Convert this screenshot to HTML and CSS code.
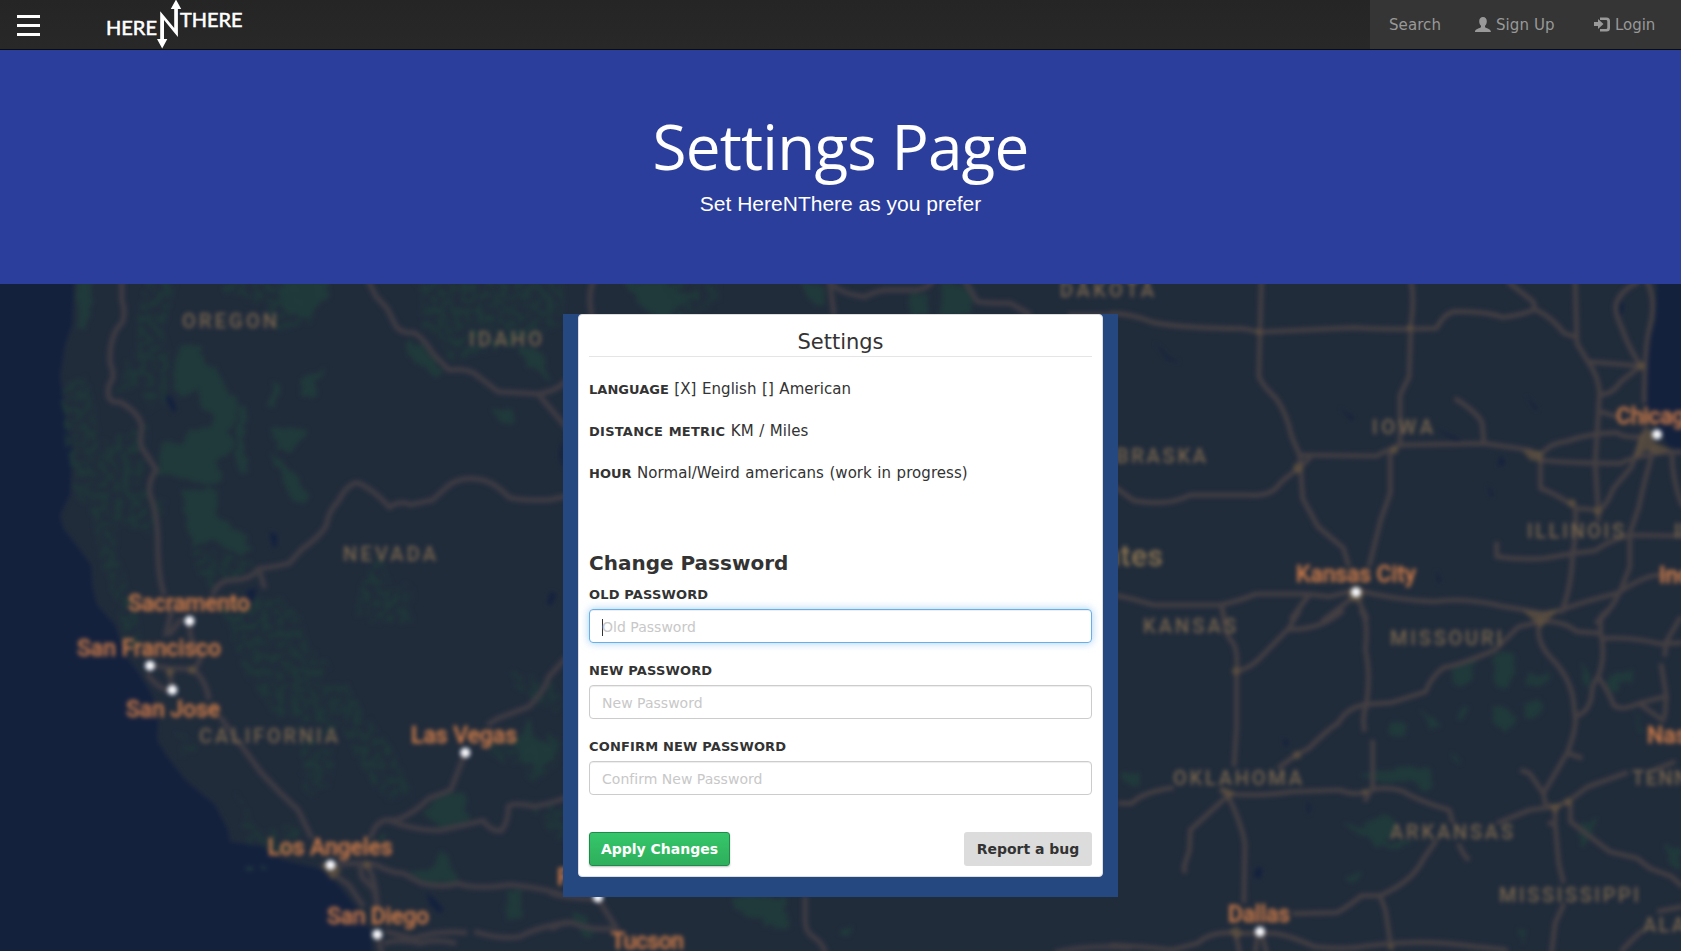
FILE: index.html
```html
<!DOCTYPE html>
<html lang="en">
<head>
<meta charset="utf-8">
<title>HereNThere - Settings</title>
<link rel="stylesheet" href="styles.css">
</head>
<body>
<nav class="navbar">
  <div class="nav-left">
    <button class="menu-btn" aria-label="Menu"><span></span><span></span><span></span></button>
    <svg class="logo" width="150" height="49" viewBox="100 0 150 49">
      <text x="106" y="34.6" textLength="51" lengthAdjust="spacingAndGlyphs">HERE</text>
      <text x="180" y="26.8" textLength="62.5" lengthAdjust="spacingAndGlyphs">THERE</text>
      <path d="M160.2 11.3L174.2 28V9H170.8L176 -0.5L181.2 9H177.9V37L164 20V39H167.3L162.2 48.5L157 39H160.2Z"/>
    </svg>
  </div>
  <div class="nav-right">
    <a class="nav-search">Search</a>
    <a class="nav-signup"><svg width="16" height="15" viewBox="0 0 16 15"><path d="M8 0C10.4 0 11.8 1.700 11.800 4.200C11.800 6.200 11 7.800 10 8.800V10.200C11 11.100 15.500 12 15.800 14.200V15H0V14.200C.4 12 5 11.100 6 10.200V8.800C5 7.800 4.200 6.200 4.200 4.200C4.200 1.700 5.600 0 8 0Z"/></svg>Sign Up</a>
    <a class="nav-login"><svg width="16" height="15" viewBox="0 0 16 15"><path d="M0 5H4V2L9.500 7L4 12V9H0ZM6 .5H12.500Q16 .5 16 4V11Q16 14.500 12.500 14.500H6V12H12Q13.300 12 13.300 10.700V4.300Q13.300 3 12 3H6Z"/></svg>Login</a>
  </div>
</nav>
<header class="hero">
  <h1>Settings Page</h1>
  <p>Set HereNThere as you prefer</p>
</header>
<main class="content">
  <svg class="map" viewBox="0 284 1681 667" preserveAspectRatio="xMidYMin slice">
    <defs>
      <filter id="soft" filterUnits="userSpaceOnUse" x="-20" y="264" width="1721" height="707" color-interpolation-filters="sRGB"><feGaussianBlur stdDeviation="2.1"/></filter>
      <filter id="ragged" x="-5%" y="-5%" width="110%" height="110%" color-interpolation-filters="sRGB">
        <feTurbulence type="fractalNoise" baseFrequency="0.07" numOctaves="3" seed="4"/>
        <feDisplacementMap in="SourceGraphic" scale="11" xChannelSelector="R" yChannelSelector="G"/>
      </filter>
      <filter id="speckle" x="-5%" y="-5%" width="110%" height="110%" color-interpolation-filters="sRGB">
        <feTurbulence type="fractalNoise" baseFrequency="0.13" numOctaves="3" seed="8" result="n"/>
        <feColorMatrix in="n" values="0 0 0 0 0  0 0 0 0 0  0 0 0 0 0  8 0 0 0 -3.6" result="m"/>
        <feDisplacementMap in="SourceGraphic" in2="n" scale="14" xChannelSelector="R" yChannelSelector="G" result="d"/>
        <feComposite in="d" in2="m" operator="in"/>
      </filter>
    </defs>
    <rect class="land" y="284" width="1681" height="667"/>
    <g filter="url(#soft)">
      <g class="water">
        <path d="M-30 240H76L72 325L65 345L60 376L65 415L72 450L70 495L60 515L63 528L80 550L91 565L92 585L97 605L115 625L125 655L140 675L152 695L158 715L157 740L166 755L185 780L215 805L228 830L230 842L262 846L282 860L308 866L325 871L338 885L358 910L370 930L376 990H-30Z"/>
        <path d="M1660 240H1720V460L1668 446L1647 405V350L1655 320Z"/>
        <path d="M563 440Q556 455 563 468ZM269 532l8 2 0 12-4 2ZM164 395l8 2 5 12-4 4ZM247 590l10-2-3 12-8 2ZM426 892l10 8 8 10-5 3-9-8ZM550 592l7 2-6 12-4-2Z"/>
        <path d="M1620 302l4 2-1 9-4 2ZM1154 342l16 16 10 4-12-2ZM1340 408l14 10-2 3ZM1434 427l28 14-4 2ZM1526 395l12 14-3 1ZM1500 455l6 8-8 4ZM1487 485l7 10-3 2ZM1307 800l4 8-3 7ZM1257 867l6 2-3 10-7-3ZM1436 570l5 12-3 1ZM1283 738l6 4-4 6Z"/>
      </g>
      <g class="park" filter="url(#ragged)">
        <path d="M77 278h15l0 25-6 26h-8ZM178 350l12-7 13 5 0 15 14 4 8 18 14 20-4 20-10 12-18-6 5-16-10-10-5-16-15 8-10-16Z"/>
        <path d="M160 443l22-2 10-12h38l4 23-16 9 5 17-14 10-20-9-30-5ZM183 490h36l-2 26 24 15 9 16-10 10-28-18-18 8-8-20Z"/>
        <path d="M270 428h34l-8 22h-18ZM270 452l14 10 12 12 12 20-4 10-16-6-6-20ZM274 383l7 2-5 24h-11ZM301 380l10-5 16-10-12 20-1 12h-14ZM240 405h8l-5 35 4 34h-8l-3-30Z"/>
        <path d="M406 342l14 2 24 28-6 4-20-12-12-10ZM517 343l26 8 8 30-20-12-12-18ZM494 410h20l-2 16h-12ZM279 285l20-6 30 2-2 18-20 20-24-8Z"/>
        <path d="M424 814l22-24 18 4 6 26-26 10ZM506 892h18l-2 26-18 2ZM405 872l24-2 15-20 10 18 2 12-30 4ZM382 830l-2 8 8-3ZM515 740l15-20 6 20 24 4-20 30-14-10Z"/>
        <path d="M730 896h57l-1 20 5 14-26-4-18-10-12-8ZM574 911l10 4 10 20-8 3-12-14ZM620 280l40 0 18 10 10 8-20 22-20-8ZM800 284h22l4 16-10 8ZM910 294h18v22h-20ZM940 284l34 2-2 28-30 2ZM842 930l10-3-2 8h-8Z"/>
        <path d="M1450 668l26-12-8 28-16 2ZM1496 653h18l2 20-10 16-12-5ZM1527 672l20 4 0-10 2 18-22 2ZM1610 676l24-6 0 12-16 2-4 10-8-4ZM1580 663l12 10-6 16ZM1490 706l16 2 12 12-12 14-12-14ZM1523 704l18-5-2 16-14 5ZM1460 706l8 2-6 14-4-4ZM1420 712l8 4 14 8-10 8ZM1390 722h18l-4 12-14 0ZM1450 752l14 12-12-2Z"/>
        <path d="M1362 775l36-7h32l4 18-4 6-16-10h-44ZM1122 773l18 2-2 10-14-2ZM1342 824l20 3 26-14 10 8-14 24-24-8ZM1370 840l44 2-6 6-32 0ZM1347 876l13-4-4 9-8-2ZM1580 825l16-8-4 20-10 12-4-4ZM1664 846l16 2v22l-12-8ZM1518 925l8 4-4 14ZM1635 708l8 26-4 0Z"/>
      </g>
      <g class="park faint" filter="url(#speckle)">
        <path d="M150 275h28l-6 34-8 18 8 30-6 48-16 6-6-25-28 6 22-46 0-26ZM225 275h100l4 14-18 34-30 8-14-26-42-12ZM62 385l24-8 10 30 4 40 50-22-6 60 24 20-16 30-36-16 4 40 20 60 2 32-16 0-8-50-14-30-8-52-22-28-8-60ZM190 550l60 6 10 20-50 14ZM415 280h150v44l-40 20-30 5-40 14-30-36Z"/>
        <path d="M220 606l60-10 20 20 10 30 22 22-16 14 24 40-10 20-14-20-40-8-28-38ZM318 685l30 0 20 32 24 28 22 50-26 6-28-38-16-34-24-20ZM300 725l36 30-6 32-22 8ZM360 590l20-40 14 40 20-8v40h-54ZM176 730l20 15 8-3-18 14ZM237 790l20 40 48-5-10 30-44-12ZM512 672l40 8 16 30-24-4-30-20ZM490 745l70-10v28l-24 22-12-20-32-6ZM525 800l44 10v40ZM660 280l60 4 0 20-40 16Z"/>
      </g>
      <g class="islands"><path d="M247 866l8 2-4 3-6-1ZM260 865l8 3 6-2-12 4Z"/></g>

      <g class="road" transform="translate(0 280) scale(.36351 .33333)">
        <path d="M335 0V60Q348 100 335 130Q300 165 303 250Q320 290 300 315Q288 370 330 366Q385 400 390 440Q385 480 388 500Q410 535 430 570Q408 600 412 640Q434 710 434 780Q434 890 452 945"/>
        <path d="M1012 0L1035 50L1065 85L1090 140Q1105 160 1140 158Q1170 180 1190 220L1235 270Q1280 265 1305 280L1370 335L1480 342Q1530 335 1560 300M1480 342L1560 445"/>
        <path d="M585 945Q600 900 640 900Q690 900 712 866Q760 860 795 850L830 808Q880 770 897 738Q905 690 930 665Q955 610 985 608Q1030 630 1072 682Q1100 660 1130 674L1190 660L1225 625Q1260 590 1310 597Q1355 600 1400 652Q1430 662 1510 660L1560 648M712 866L728 925"/>
      </g>
      <g class="road" transform="translate(0 610) scale(.36351 .33333)">
        <path d="M475 -10L455 80M520 35L525 85Q550 120 550 150L535 180Q570 220 575 270M500 25L465 75M405 190Q430 235 474 245M412 165L465 175L540 178M465 175L474 240M605 320L645 380Q680 430 720 490Q770 550 820 600L858 685M1020 685Q1030 635 1065 630H1090Q1140 610 1180 565L1240 540L1280 428M1340 345L1370 325L1455 290Q1500 240 1510 200L1560 140"/>
        <path d="M1065 630Q1150 665 1215 660L1330 632Q1350 665 1380 662Q1400 630 1398 590Q1410 575 1470 590Q1520 580 1560 562M909 765Q1000 755 1035 765Q1080 790 1110 790L1160 820Q1220 835 1260 820Q1300 840 1405 824Q1500 835 1560 858M909 785L960 825L1000 890M990 765L995 800L1030 840L1040 900M1010 765Q1035 810 1037 890M1038 973L1050 1030M1060 965L1140 985Q1200 960 1285 968M1305 965Q1380 990 1430 980Q1480 950 1570 935M1055 1000Q1100 985 1155 1000Q1200 985 1255 1000"/>
      </g>
      <g class="road" transform="translate(550 280) scale(.36994 .33333)">
        <path d="M118 0Q100 50 114 110M755 0Q775 40 850 50Q890 30 910 30H990Q1025 25 1035 0M755 0L768 105M1120 0L1155 65Q1190 70 1245 70L1300 105M1400 105L1520 105"/>
      </g>
      <g class="road" transform="translate(550 871) scale(.36994 .33333)">
        <path d="M0 65Q25 80 130 85L180 172Q110 180 60 155Q30 155 0 175M690 75V150Q690 185 715 200Q735 215 745 245M1365 245Q1450 220 1570 230"/>
      </g>
      <g class="road east" transform="translate(1110 280) scale(.36483 .33333)">
        <path d="M415 0L408 290Q420 320 455 355Q485 400 498 470L520 525L528 655L570 740L640 805L655 860M825 0Q835 60 825 130L820 290L795 345L795 490L768 515V640L742 720L710 860"/>
        <path d="M0 100Q60 100 120 128Q200 145 365 146L410 156Q540 150 670 143Q740 150 895 145Q915 100 945 94Q1040 95 1075 112Q1130 105 1165 88L1160 65L1090 5M1165 88Q1210 110 1245 160L1275 170M1275 0L1280 190L1310 245Q1340 290 1342 340L1330 550L1338 690M1310 245L1455 258M1345 345Q1380 340 1400 305L1455 258Q1420 200 1405 150Q1380 90 1388 70Q1400 30 1450 5M1470 0Q1500 60 1480 140Q1465 200 1465 370M1345 395L1390 410"/>
        <path d="M945 355Q1010 400 1020 430L1025 490M520 525L730 528Q760 510 800 495L1025 490L1150 510L1180 530Q1200 490 1250 485Q1310 460 1390 458Q1410 475 1460 470M1180 530L1180 625Q1220 640 1280 685L1340 690Q1360 680 1380 625L1430 560Q1450 490 1470 440M1180 540Q1260 550 1400 550Q1450 520 1570 515M1492 500Q1460 620 1450 680L1425 760L1425 860L1400 930Q1370 1000 1330 1030M1540 515Q1540 600 1570 680M1060 785V830Q1120 840 1190 835L1270 820L1330 812Q1360 785 1425 765L1570 768M1275 685Q1280 760 1268 820Q1265 930 1235 1000"/>
        <path d="M520 565Q470 600 455 625Q430 650 380 645H220Q160 680 65 662L0 610M550 530L510 575M0 942Q60 955 120 975H300Q350 965 400 942H540L600 950L675 930Q780 960 890 965Q970 950 1080 980L1190 1000L1240 990Q1280 970 1390 940Q1460 890 1500 885L1570 885M305 975L315 1030M545 945L495 1020M675 945L580 1025M675 945L705 1020M1338 690V725"/>
      </g>
      <g class="road east" transform="translate(1110 610) scale(.36483 .33333)">
        <path d="M310 0Q310 70 335 95Q352 120 347 185V350L340 470M347 185Q390 170 410 145L490 55L520 0M490 58Q580 60 640 0M685 0Q710 20 700 120Q715 190 703 285Q690 320 698 365M720 390V530L698 575M460 475L510 435L545 415Q600 355 625 340Q650 290 705 283L770 278L865 245Q880 200 915 172Q960 165 1055 120L1120 50L1180 35"/>
        <path d="M1180 20Q1160 90 1210 145Q1260 200 1270 270L1275 320Q1280 350 1255 425L1188 550L1195 590M1125 480L1150 490L1188 550M1255 430L1295 445M1180 35Q1240 30 1280 65L1345 70L1345 20L1365 0M1345 70Q1360 140 1338 200Q1320 220 1320 260Q1310 310 1275 318M1338 200Q1370 250 1380 285Q1400 305 1450 280L1520 260M1350 85Q1430 80 1510 102L1570 98M1565 20L1525 95L1520 140M1510 160L1525 260L1520 325M1450 280L1520 335"/>
        <path d="M22 580H60Q90 545 175 533M300 540L325 552Q410 560 500 545L630 540Q660 555 700 548Q740 525 800 542Q850 575 930 600L940 640M955 700Q970 740 985 750M320 560L220 660L218 720L203 770L205 790M325 560Q360 640 370 700L367 880M895 690L860 745Q830 815 740 857H690Q640 900 620 908L500 911M740 857L755 900L770 1010M1060 640L1150 600L1220 590L1255 575L1310 530L1420 487M1220 595V640L1230 760L1243 820M1245 880L1220 940L1210 1030M1200 638L1225 645M1262 580V635L1370 725L1445 745L1480 775L1540 800L1570 830M1490 480L1550 455M1570 890L1500 905"/>
        <path d="M0 1005Q100 1010 170 1020L240 1000Q280 960 350 970H450Q490 975 560 1010Q650 1020 700 1008Q850 985 1000 1010L1090 1020M1400 1025Q1430 990 1460 960M345 970L355 1030M405 970L398 1030M415 970L430 1030"/>
      </g>
      <g class="hub">
        <circle cx="1259" cy="332" r="3"/><circle cx="1410" cy="328" r="3"/><circle cx="1298" cy="468" r="5"/><circle cx="1394" cy="450" r="4"/><path d="M1522 450L1542 451V462L1530 460Z"/><circle cx="1641" cy="366" r="4"/><path d="M1640 436L1650 428L1654 442L1672 450L1656 454L1646 450L1634 460Z"/><circle cx="1598" cy="511" r="4"/><circle cx="1572" cy="503" r="4"/><path d="M1522 610L1541 613L1560 609L1549 619L1541 628L1532 619Z"/><circle cx="1236" cy="671" r="4"/><path d="M1220 786L1235 792L1228 800Z"/><circle cx="1297" cy="755" r="4"/><path d="M1229 931L1237 926L1243 934L1236 939Z"/><path d="M1548 804H1563L1555 814Z"/><circle cx="1568" cy="802" r="4"/><circle cx="1391" cy="947" r="3"/><circle cx="1365" cy="792" r="3"/><path d="M320 865L330 860L342 870L332 880Z"/><circle cx="192" cy="670" r="4"/><circle cx="170" cy="672" r="4"/><circle cx="367" cy="865" r="4"/><circle cx="1356" cy="594" r="8"/>
      </g>
      <g class="state">
        <text x="182" y="328" textLength="95">OREGON</text><text x="469" y="346" textLength="73">IDAHO</text><text x="343" y="561" textLength="93">NEVADA</text><text x="199" y="743" textLength="139">CALIFORNIA</text><text x="1060" y="297" textLength="94">DAKOTA</text><text x="1085" y="463" textLength="121">NEBRASKA</text><text x="1372" y="433.500" textLength="61">IOWA</text><text x="1527" y="538" textLength="97">ILLINOIS</text><text x="1674" y="538">INDIANA</text><text x="1143" y="633" textLength="93">KANSAS</text><text x="1390" y="644.500" textLength="112">MISSOURI</text><text x="1173" y="785" textLength="129">OKLAHOMA</text><text x="1390" y="838.500" textLength="123">ARKANSAS</text><text x="1499" y="902" textLength="140">MISSISSIPPI</text><text x="1632" y="785" textLength="122">TENNESSEE</text><text x="1643" y="932" textLength="108">ALABAMA</text>
        <text class="country" x="977" y="566" textLength="186">United States</text>
      </g>
      <g class="city">
        <text x="128" y="611" textLength="122">Sacramento</text><text x="77" y="656" textLength="144">San Francisco</text><text x="126" y="717" textLength="94">San Jose</text><text x="411" y="743" textLength="106">Las Vegas</text><text x="267.500" y="855" textLength="125">Los Angeles</text><text x="327" y="924" textLength="102">San Diego</text><text x="611" y="949" textLength="73">Tucson</text><text x="557" y="885">Phoenix</text><text x="1616" y="424" textLength="82">Chicago</text><text x="1296" y="582" textLength="120">Kansas City</text><text x="1659" y="583">Indianapolis</text><text x="1647" y="743">Nashville</text><text x="1228" y="921.500" textLength="62">Dallas</text>
      </g>
      <g class="dot">
        <circle cx="189.500" cy="621" r="5"/><circle cx="150" cy="665.700" r="5"/><circle cx="172.300" cy="690" r="5"/><circle cx="465.300" cy="752.700" r="5"/><circle cx="330.500" cy="865" r="5"/><circle cx="377.300" cy="934.500" r="5"/><circle cx="598" cy="897.500" r="5"/><circle cx="1356" cy="592.300" r="5"/><circle cx="1657" cy="434.500" r="5"/><circle cx="1260" cy="931.700" r="5"/>
      </g>
    </g>
  </svg>
  <div class="frame">
    <form class="card">
      <h2>Settings</h2>
      <p class="option"><b>LANGUAGE</b> [X] English [] American</p>
      <p class="option"><b class="wide">DISTANCE METRIC</b> KM / Miles</p>
      <p class="option"><b>HOUR</b> Normal/Weird americans (work in progress)</p>
      <h3>Change Password</h3>
      <label>OLD PASSWORD</label>
      <div class="input focused"><span class="caret"></span><span>Old Password</span></div>
      <label>NEW PASSWORD</label>
      <div class="input"><span>New Password</span></div>
      <label>CONFIRM NEW PASSWORD</label>
      <div class="input"><span>Confirm New Password</span></div>
      <div class="actions">
        <button type="button" class="btn apply">Apply Changes</button>
        <button type="button" class="btn report">Report a bug</button>
      </div>
    </form>
  </div>
</main>
</body>
</html>
```

FILE: styles.css
```css
* { box-sizing: border-box; }
body {
  margin: 0;
  height: 951px;
  display: flex;
  flex-direction: column;
  overflow: hidden;
  font-family: "DejaVu Sans", Verdana, sans-serif;
  font-size: 15px;
  color: #333;
}
.navbar {
  height: 50px;
  flex: none;
  display: flex;
  justify-content: space-between;
  background: linear-gradient(#252525, #282828);
  border-bottom: 1px solid #0b0c10;
}
.nav-left { display: flex; }
.menu-btn {
  display: flex;
  flex-direction: column;
  gap: 6px;
  width: 23px;
  margin: 15px 60px 0 17px;
  padding: 0;
  border: 0;
  background: none;
}
.menu-btn span { height: 3px; background: #fff; }
.logo { overflow: visible; fill: #fff; }
.logo text {
  font-family: Lato, sans-serif;
  font-size: 19px;
  stroke: #fff;
  stroke-width: .5px;
}
.nav-right {
  display: flex;
  width: 311px;
  padding: 2px 0 0 19px;
  background: #353535;
  color: #999;
  line-height: 47px;
}
.nav-right a { display: flex; align-items: center; white-space: nowrap; letter-spacing: .08px; }
.nav-right svg { fill: #999; margin-right: 5px; flex: none; margin-top: -3px; }
.nav-search { width: 86px; }
.nav-signup { width: 119px; }
.nav-right .nav-login { letter-spacing: -.05px; }
.hero {
  height: 234px;
  flex: none;
  background: #2c3e9b;
  color: #fff;
  text-align: center;
  padding-top: 62px;
}
.hero h1 {
  margin: 0;
  font: 400 62px/68px "Open Sans", "Noto Sans", sans-serif;
  letter-spacing: -.78px;
}
.hero p {
  margin: 9px 0 0;
  font: 21px/30px "Liberation Sans", Arial, sans-serif;
}
.content {
  position: relative;
  flex: 1;
  display: flex;
  justify-content: center;
  align-items: flex-start;
  padding-top: 30px;
}
.map { position: absolute; inset: 0; width: 100%; height: 667px; }
.land { fill: #212c3b; }
.water { fill: #14213d; }
.park { fill: #20393b; }
.faint { fill: #1f393a; opacity: .85; }
.islands { fill: #1e3a3f; }
.road path {
  fill: none;
  stroke: #3d3b43;
  stroke-width: 5.500px;
  stroke-linejoin: round;
  vector-effect: non-scaling-stroke;
}
.road.east path { stroke: #443f43; stroke-width: 4.700px; }
.hub { fill: #655541; opacity: .7; }
.state text { font: 500 20px Roboto, sans-serif; fill: #78654f; }
.state .country { font-size: 30px; fill: #8a7350; }
.city text { font: 500 23px Roboto, sans-serif; fill: #cb7a49; stroke: #cb7a49; stroke-width: .3px; }
.dot { fill: #f6f7fb; }
.frame {
  position: relative;
  width: 555px;
  height: 583px;
  padding: 0 15px 20px;
  background: #24487f;
}
.card {
  height: 563px;
  border: 1px solid #ddd;
  border-radius: 4px;
  background: #fff;
  padding: 10px;
}
.card h2 {
  margin: 0 0 19px;
  height: 32px;
  border-bottom: 1px solid #e5e5e5;
  text-align: center;
  font-weight: 400;
  font-size: 21px;
  line-height: 35px;
}
.option { margin: 0 0 16px; height: 26px; line-height: 26px; white-space: nowrap; word-spacing: .7px; letter-spacing: .05px; }
.option b { font-size: 13px; letter-spacing: .02px; }
.option .wide { letter-spacing: .25px; }
.card h3 { margin: 63px 0 7px; font-size: 20px; line-height: 28px; }
.card label { display: block; font-size: 13px; font-weight: 700; line-height: 22px; margin-bottom: 3px; letter-spacing: .16px; }
.input {
  display: flex;
  align-items: center;
  height: 34px;
  margin-bottom: 17px;
  padding: 2px 12px 0;
  border: 1px solid #ccc;
  border-radius: 4px;
  box-shadow: inset 0 1px 1px rgba(0,0,0,.075);
  font-size: 14px;
  letter-spacing: .02px;
  color: #c8c8c8;
}
.input.focused { border-color: #66afe9; box-shadow: inset 0 1px 1px rgba(0,0,0,.075), 0 0 8px rgba(102,175,233,.6); }
.caret { width: 1px; height: 17px; margin-right: -1px; background: #333; }
.actions { display: flex; justify-content: space-between; margin-top: 37px; }
.btn {
  height: 34px;
  border-radius: 3px;
  padding: 0;
  font: 700 14px "DejaVu Sans", Verdana, sans-serif;
}
.apply {
  width: 141px;
  border: 1px solid #21894b;
  background: linear-gradient(#35c66b, #2faf5b);
  box-shadow: 0 1px 2px rgba(0,0,0,.25);
  color: #fff;
}
.report { width: 128px; border: 0; background: #dcdcdc; color: #333; }
```
